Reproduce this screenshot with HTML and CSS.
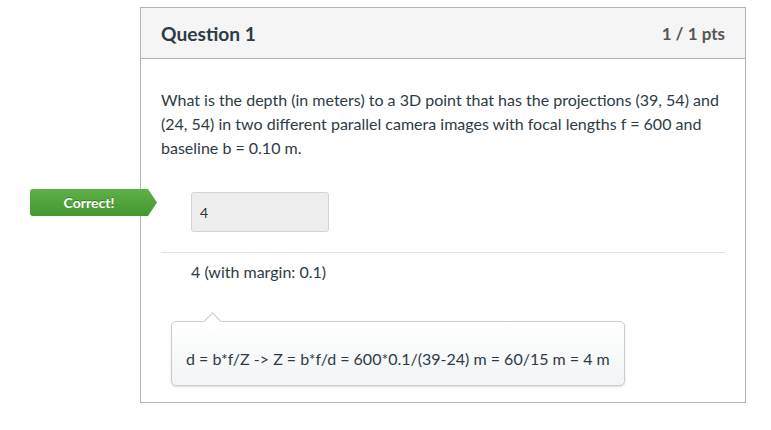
FILE: index.html
```html
<!DOCTYPE html>
<html lang="en">
<head>
<meta charset="utf-8">
<title>Question 1</title>
<link rel="stylesheet" href="styles.css">
</head>
<body>
<div class="page">
  <div class="card">
    <div class="card-header">
      <h2 class="title">Question 1</h2>
      <span class="pts">1 / 1 pts</span>
    </div>
    <div class="card-body">
      <p class="question">What is the depth (in meters) to a 3D point that has the projections (39, 54) and (24, 54) in two different parallel camera images with focal lengths f = 600 and baseline b = 0.10 m.</p>
      <div class="answer-row">
        <span class="badge">Correct!</span>
        <div class="answer-input">4</div>
      </div>
      <div class="correct-value">4 (with margin: 0.1)</div>
      <div class="comment">d = b*f/Z -&gt; Z = b*f/d = 600*0.1/(39-24) m = 60/15 m = 4 m</div>
    </div>
  </div>
</div>
</body>
</html>
```
FILE: styles.css
```css
* { box-sizing: border-box; }
html, body { margin: 0; padding: 0; background: #fff; }
body {
  font-family: Lato, "Open Sans", "Liberation Sans", sans-serif;
  color: #2d3b45;
}
.page {
  padding: 7px 0 0 140px;
}
.card {
  width: 606px;
  border: 1px solid #b3b3b3;
  background: #fff;
}
.card-header {
  height: 51px;
  background: #f5f5f5;
  border-bottom: 1px solid #b3b3b3;
  display: flex;
  align-items: center;
  justify-content: space-between;
  padding: 0 20px;
}
.title {
  margin: 0;
  font-size: 19.2px;
  font-weight: 700;
  color: #2d3b45;
}
.pts {
  font-size: 17px;
  font-weight: 700;
  color: #555;
}
.card-body {
  padding: 29px 20px 16px;
}
.question {
  margin: 0;
  font-size: 16px;
  line-height: 24px;
}
.answer-row {
  position: relative;
  margin-top: 32px;
  padding: 0 0 20px 30px;
  border-bottom: 1px solid #e2e2e2;
}
.badge {
  position: absolute;
  left: -131px;
  top: -3px;
  width: 127px;
  height: 27px;
  padding-right: 9px;
  display: flex;
  align-items: center;
  justify-content: center;
  background: linear-gradient(#5eb048, #44982f);
  border-radius: 3px 0 0 3px;
  clip-path: polygon(0 0, calc(100% - 9px) 0, 100% 50%, calc(100% - 9px) 100%, 0 100%);
  color: #fff;
  font-size: 14px;
  font-weight: 700;
  text-shadow: 0 -1px 0 rgba(0,0,0,0.25);
}
.answer-input {
  width: 138px;
  height: 40px;
  background: #eeeeee;
  border: 1px solid #d4d4d4;
  border-radius: 3px;
  padding-left: 8px;
  display: flex;
  align-items: center;
  font-size: 14px;
  color: #333;
}
.correct-value {
  padding: 7px 0 0 30px;
  font-size: 16px;
  line-height: 24px;
}
.comment {
  position: relative;
  width: fit-content;
  margin: 37px 0 0 10px;
  padding: 25px 14px 14px 14px;
  font-size: 16px;
  line-height: 24px;
  background: linear-gradient(#ffffff, #f2f4f5);
  border: 1px solid #c7cdd1;
  border-radius: 5px;
  box-shadow: 0 1px 2px rgba(0,0,0,0.15);
}
.comment::before {
  content: "";
  position: absolute;
  left: 34px;
  top: -7px;
  width: 12px;
  height: 12px;
  background: #fff;
  border-top: 1px solid #c7cdd1;
  border-left: 1px solid #c7cdd1;
  transform: rotate(45deg);
}
```
